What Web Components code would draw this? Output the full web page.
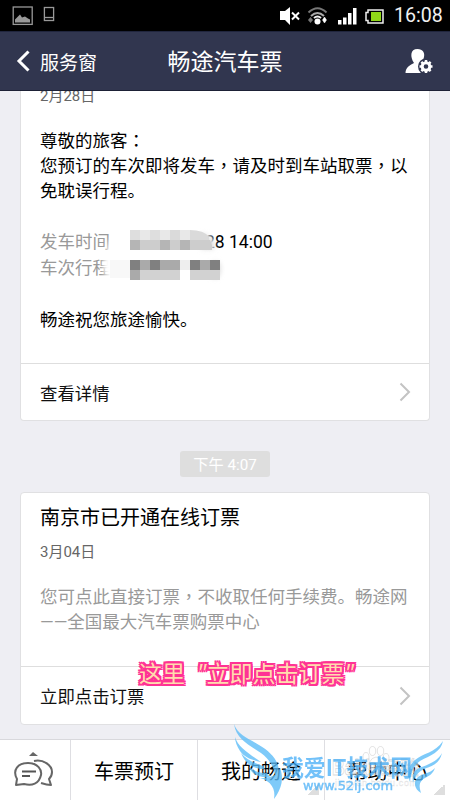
<!DOCTYPE html>
<html lang="zh-CN"><head><meta charset="utf-8"><title>畅途汽车票</title>
<style>
html,body{margin:0;height:100%;overflow:hidden}
body{font-family:Roboto,"Noto Sans CJK SC",sans-serif;background:#eeeef3}
</style></head><body>
<phone-screen></phone-screen>
<script>
function define(name, html){
  const t=document.createElement('template'); t.innerHTML=html;
  customElements.define(name, class extends HTMLElement{
    constructor(){super();this.attachShadow({mode:'open'}).append(t.content.cloneNode(true));}
  });
}
define('status-bar',`<style>:host{display:flex;height:31px;background:#000;align-items:center;color:#fff;flex:none}svg{display:block}.time{font-size:19.6px;line-height:34px;width:50px;margin-left:7px;white-space:nowrap;color:#f0f0f0}</style>
<svg width="387" height="31" viewBox="0 0 387 31"><g fill="none" stroke="#999" stroke-width="1.3"><rect x="13.2" y="7" width="19" height="17.4"/><rect x="44.4" y="7.5" width="9.2" height="13" /><path d="M44 17.5h10"/></g><path d="M15 22.5v-3l3-3 2-2 2 3 3-1 3 2 2 1v3z" fill="#999"/>
<path d="M280 11h5l5-4v18l-5-5h-5z" fill="#fff"/><path d="M292 12.5l7 7M299 12.5l-7 7" stroke="#fff" stroke-width="2"/>
<g fill="none" stroke="#777" stroke-width="2"><path d="M308.5 12.5Q317.500 4 326.500 12.500"/><path d="M311 16Q317.500 10 324 16" stroke="#aaa"/><path d="M314 18Q317.500 15 321 18" stroke="#eee"/></g><circle cx="317.500" cy="21.500" r="3" fill="#fff"/><path d="M310.500 17l2.500 3-2.500 3-2.500-3z" fill="#777"/><path d="M324.500 17l2 3-2 3-2-3z" fill="#fff" stroke="#fff" stroke-width=".5"/>
<path d="M338 20h3.500v4.500H338zM343 17.500h3.500v7H343zM348 13h3.500v11.500H348zM353 8h3.500v16.500H353z" fill="#fff"/>
<path d="M368 10h15v13h-15v-2.500h-2v-8h2z" fill="none" stroke="#eee" stroke-width="1.5"/><path d="M371 12h10v9h-10z" fill="#90d718"/></svg><div class="time">16:08</div>`);
define('nav-bar',`<style>:host{display:grid;grid-template-columns:1fr auto 1fr;align-items:center;height:60px;box-sizing:border-box;background:#31364f;border-top:1px solid #20253d;border-bottom:1px solid #1d2136;color:#fff;flex:none;padding:0 16px}.back{display:flex;align-items:center;gap:9px;font-size:19px}.back span{padding-top:1px}.title{font-size:23px;line-height:54px;padding-top:4px}.user{justify-self:end}svg{display:block}</style>
<div class="back"><svg width="15" height="24" viewBox="0 0 15 24"><path d="M12.500 2.500L3 12l9.500 9.500" fill="none" stroke="#fff" stroke-width="3"/></svg><span>服务窗</span></div><div class="title">畅途汽车票</div>
<svg class="user" width="30" height="26" viewBox="0 0 30 26"><path d="M13.500 1c5.500 0 7.500 4 6.500 8-.5 3-2.500 4-2.500 6l-2 3 2 7H1.500c0-6 5-8 8.500-10C6 9 6 1 13.500 1z" fill="#fff"/><circle cx="22" cy="18.500" r="8" fill="#31364f"/><circle cx="22" cy="18.500" r="3.800" fill="none" stroke="#fff" stroke-width="3"/><g stroke="#fff" stroke-width="2.500"><path d="M22 12v2M22 23v2M15.500 18.500h2M26.500 18.500h2M17.400 13.900l1.400 1.400M25.200 21.700l1.400 1.400M17.400 23.100l1.400-1.400M25.200 15.300l1.400-1.400"/></g></svg>`);
define('message-card',`<style>:host{display:flex;flex-direction:column;box-sizing:border-box;background:#fff;border:1px solid #e0e0e2;border-radius:4px;width:410px;flex:none}.body{flex:1;padding:0 19px;white-space:nowrap}.action{height:var(--action-height,58px);box-sizing:border-box;border-top:1px solid #dedede;padding:0 18px 0 19px;display:flex;justify-content:space-between;align-items:center;font-size:17.4px;color:#111}svg{display:block}</style>
<div class="body"><slot></slot></div><div class="action"><slot name="action"></slot><svg width="12" height="20" viewBox="0 0 12 20"><path d="M1.500 1.500L10 10l-8.500 8.500" fill="none" stroke="#c3c3c3" stroke-width="2"/></svg></div>`);
define('blurred-mosaic',`<style>:host{display:block;position:absolute;left:63px;top:-1px}svg{display:block;overflow:visible}</style><svg width="130" height="54" viewBox="0 0 130 54"><defs><filter id="f" x="-20%" y="-20%" width="140%" height="140%"><feGaussianBlur stdDeviation="2.500"/></filter></defs><path d="M7 12Q18 1 38 1h54q14 3 18 11v38H4q-6-8-3-20z" fill="#fff" filter="url(#f)"/><path fill="#ddd" d="M98 5q10 3 13 10v6H98zM116 34q4 8-1 16h-6V34z" filter="url(#f)"/>
<path fill="#f4f4f4" d="M7 32h20v18H7z" opacity=".6"/><path fill="#dedede" d="M27 2h10v10H27zM47 2h10v10H47z"/><path fill="#e8e8e8" d="M37 2h10v10H37zM57 2h10v10H57zM77 2h10v10H77z"/><path fill="#dadada" d="M67 2h10v10H67zM87 2q14 0 19 7v3H87z"/><path fill="#b5b5b5" d="M27 12h10v10H27zM57 12h10v10H57zM77 12h10v10H77z"/><path fill="#cdcdcd" d="M37 12h20v10H37zM67 12h10v10H67zM87 12h20l2 5v5H87z"/><path fill="#808080" d="M27 32h10v10H27zM47 32h10v10H47zM87 32h10v10H87zM107 32h10v10h-10z"/><path fill="#aaa" d="M37 32h10v10H37zM57 32h20v10H57zM97 32h10v10H97zM27 42h10v10H27z"/><path fill="#d2d2d2" d="M37 42h40v10H37zM87 42h30v10H87z"/><path fill="#eee" d="M77 32h10v10H77z"/><path fill="#fff" d="M77 42h10v10H77z"/></svg>`);
define('chat-area',`<style>:host{display:flex;flex-direction:column;align-items:center;flex:1;min-height:0;overflow:hidden;background:#eeeef3}
.first{height:338px;--action-height:57px;border-top:0;border-top-left-radius:0;border-top-right-radius:0;margin-top:-8px}.date{font-size:15px;color:#666;line-height:20px}.first .date{margin-top:3px}.text{font-size:17.5px;line-height:26px;color:#000}.first .text{margin-top:21px}.text p{margin:0;height:26px}.text .short{height:25px}.text.muted,.muted{color:#999}.redacted{position:relative}.stamp{flex:none;width:90px;height:26px;margin:30px 0 15px;background:#dedede;border-radius:3px;color:#fff;font-size:15.200px;line-height:29px;text-align:center}.second{height:233px}.second h2{font-weight:400;font-size:20px;line-height:28px;margin:11px 0 10px;color:#000}.second .text{margin-top:21px}</style>
<message-card class="first"><div class="date">2月28日</div><div class="text"><p class="short">尊敬的旅客<span lang="zh-TW" style="font-family:'Noto Sans CJK TC'">：</span></p><p>您预订的车次即将发车<span lang="zh-TW" style="font-family:'Noto Sans CJK TC'">，</span>请及时到车站取票<span lang="zh-TW" style="font-family:'Noto Sans CJK TC'">，</span>以</p><p>免耽误行程。</p><p class="short"></p><div class="redacted"><p><span class="muted">发车时间</span><span style="margin-left:95px">28 14:00</span></p><p class="muted">车次行程</p><blurred-mosaic></blurred-mosaic></div><p></p><p>畅途祝您旅途愉快。</p></div><span slot="action">查看详情</span></message-card>
<div class="stamp">下午 4:07</div>
<message-card class="second"><h2>南京市已开通在线订票</h2><div class="date">3月04日</div><div class="text muted"><p>您可点此直接订票<span lang="zh-TW" style="font-family:'Noto Sans CJK TC'">，</span>不收取任何手续费。畅途网</p><p>——全国最大汽车票购票中心</p></div><span slot="action">立即点击订票</span></message-card>`);
define('bottom-menu',`<style>:host{display:grid;grid-template-columns:70px 127px 127px 126px;height:61px;box-sizing:border-box;border-top:1px solid #d8d8dc;background:#fff;flex:none}div{display:flex;align-items:center;justify-content:center;font-size:20px;color:#000;line-height:58px;box-sizing:border-box;padding-top:3px}div+div{border-left:1px solid #dedee2}.menu{background:linear-gradient(135deg,transparent 50%,#dedede 50%) right 5px bottom 6px/11px 11px no-repeat}svg{display:block;margin:-3px 2px 0 0}</style>
<div><svg width="42" height="40" viewBox="0 0 42 40"><path d="M16 5l4-4 5 4z" fill="#666"/><g fill="none" stroke="#666" stroke-width="2" stroke-linejoin="round"><path d="M3 34l1-6C-1 19 5 12 15 12s14 7 13 12c-2 9-9 11-17 9z"/><path d="M21 10c9-2 18 4 18 11 0 4-2 6-3 7l2 6c-4 0-7-1-10-2" /></g><path d="M9 20.500h14M9 25h8" stroke="#555" stroke-width="2"/></svg></div><div>车票预订</div><div class="menu">我的畅途</div><div class="menu">帮助中心</div>`);
define('pink-caption',`<style>:host{position:absolute;left:139px;top:654px;font:400 23px/36px "Noto Sans CJK SC",sans-serif;color:#ffdcae;text-shadow:2px 0 #ff3294,-2px 0 #ff3294,0 2px #ff3294,0 -2px #ff3294,2px 2px #ff3294,-2px 2px #ff3294,2px -2px #ff3294,-2px -2px #ff3294,1px 0 #ff3294,-1px 0 #ff3294,0 1px #ff3294,0 -1px #ff3294;white-space:nowrap;display:flex}i{font-family:"Noto Sans",sans-serif;font-size:24px;font-weight:400}.open{margin-left:12px}</style><span>这里</span><i class="open">"</i><span>立即点击订票</span><i>"</i>`);
define('site-watermark',`<style>:host{position:absolute;left:225px;top:720px;width:225px;height:80px}svg{display:block;overflow:visible}</style>
<svg width="225" height="80" viewBox="0 0 225 80"><g fill="#fff" fill-opacity=".45" stroke="#ccc" stroke-opacity=".7" stroke-width=".8"><ellipse cx="141" cy="37" rx="3" ry="4.500"/><ellipse cx="147.500" cy="31" rx="3.200" ry="4.500"/><ellipse cx="155.500" cy="31" rx="3.200" ry="4.500"/><ellipse cx="161" cy="38" rx="3" ry="4.500"/><path d="M151 37q4 0 6 6 4 7-4 7h-7q-7-1-2-7 3-6 7-6z"/><g font-family="Liberation Sans"><text x="107" y="55" font-size="22" font-weight="700" textLength="49" lengthAdjust="spacingAndGlyphs">Baidu</text><text x="156" y="55" font-size="19" font-family="Noto Sans CJK SC">经验</text><text x="110" y="66" font-size="9" textLength="82" stroke-width=".3">jingyan.baidu.com</text></g></g>
<g fill="#5bbcf8" opacity=".78"><path d="M9 4C13 15 23 18 34 25 46 32 54 41 54 52q0 8-3 12C51 52 47 41 36 33 24 25 11 19 9 4z"/><path d="M10 17c3 10 13 16 26 25-9-2-16-4-21-11-3-5-5-9-5-14z"/><path d="M16 33c6 7 13 10 22 13l2 3c-11 0-19-4-24-16z"/><path d="M24 47c7 5 11 6 18 6l3 4c-10 1-18-2-21-10z"/><path d="M35 58c10 0 17-2 20-10 4 10 2 20-6 31 2-10-3-18-14-21z"/><path d="M218 21c-8 12-20 12-28 19-7 6-8 14-5 22 1-8 2-15 10-21 11-6 21-9 23-20z"/><path d="M217 33c-5 9-15 12-23 15-6 3-7 9-6 15 2-7 5-11 11-14 10-3 16-7 18-16z"/><path d="M210 48c-6 6-12 5-17 9-5 4-4 12 3 16-2-7-2-10 2-14 6-3 10-5 12-11z"/></g>
<g fill="#43adf7" opacity=".75"><text x="57" y="55.500" font-family="Noto Sans CJK SC" font-size="22.500" font-weight="700" textLength="130" lengthAdjust="spacingAndGlyphs">我爱IT技术网</text><text x="78" y="69.500" font-family="DejaVu Sans" font-size="12" textLength="90" lengthAdjust="spacingAndGlyphs" stroke="#43adf7" stroke-width=".4">www.52ij.com</text></g></svg>`);
define('phone-screen',`<style>:host{display:flex;flex-direction:column;position:relative;width:450px;height:800px;overflow:hidden}</style><status-bar></status-bar><nav-bar></nav-bar><chat-area></chat-area><bottom-menu></bottom-menu><pink-caption></pink-caption><site-watermark></site-watermark>`);
</script></body></html>
